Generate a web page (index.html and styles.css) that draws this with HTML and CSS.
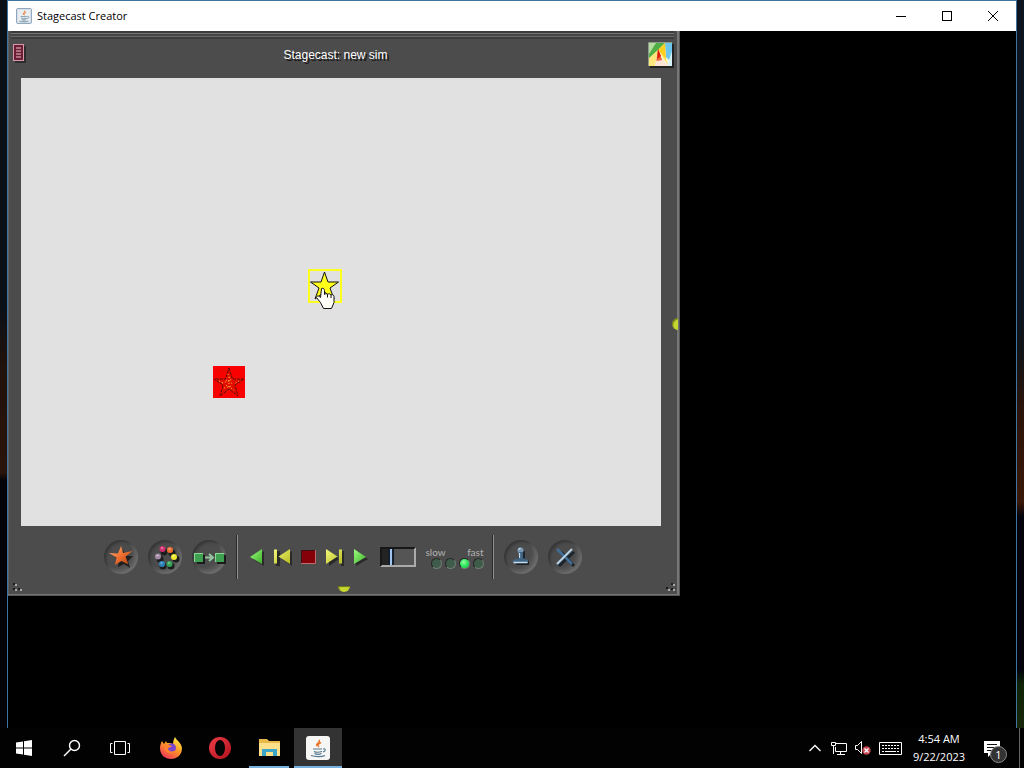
FILE: index.html
```html
<!DOCTYPE html>
<html lang="en">
<head>
<meta charset="utf-8">
<title>Stagecast Creator</title>
<link rel="stylesheet" href="styles.css">
</head>
<body>
<svg class="defs" aria-hidden="true">
  <defs>
    <linearGradient id="green" x1="0" y1="0" x2="1" y2="1"><stop offset="0" stop-color="#9cff7c"/><stop offset="1" stop-color="#3fae2c"/></linearGradient>
    <linearGradient id="lime" x1="0" y1="0" x2="1" y2="1"><stop offset="0" stop-color="#f6f77c"/><stop offset="1" stop-color="#b4bd1e"/></linearGradient>
    <linearGradient id="orange" x1="0" y1="0" x2="1" y2="1"><stop offset="0" stop-color="#ffb27a"/><stop offset=".5" stop-color="#f07030"/><stop offset="1" stop-color="#a83c10"/></linearGradient>
    <linearGradient id="fox" x1=".8" y1="0" x2=".2" y2="1"><stop offset="0" stop-color="#fff04a"/><stop offset=".45" stop-color="#ff9a26"/><stop offset="1" stop-color="#f0305c"/></linearGradient>
    <linearGradient id="opera" x1="0" y1="0" x2="1" y2="1"><stop offset="0" stop-color="#f03c48"/><stop offset="1" stop-color="#b0121e"/></linearGradient>
    <symbol id="java" viewBox="0 0 24 24">
      <path d="M13 4c2 3-4 3-2 6M15 6.500c-3 1.500-4 2.500-2 4.500" fill="none" stroke="#e8762c" stroke-width="1.500"/>
      <path d="M7 13h9M8 15.500c2 1 5 1 8 0M8.500 17.500c2 1 5 1 7 0M5 19.500c4 1.500 11 1.500 14 0M17 13c3-1 3 2 0 3" fill="none" stroke="#54788f" stroke-width="1.100"/>
    </symbol>
  </defs>
</svg>

<main class="desktop">
  <section class="window">
    <header class="titlebar">
      <svg class="app-icon" viewBox="0 0 24 24"><rect x="1" y="1" width="22" height="22" rx="1" fill="#e9eef2" stroke="#7c98b2" stroke-width="1.500"/><use href="#java"/></svg>
      <h1 class="window-title">Stagecast Creator</h1>
      <button class="win-btn" aria-label="Minimize"><svg viewBox="0 0 12 12"><path d="M1 6.500h10"/></svg></button>
      <button class="win-btn" aria-label="Maximize"><svg viewBox="0 0 12 12"><rect x="1.500" y="1.500" width="9" height="9"/></svg></button>
      <button class="win-btn" aria-label="Close"><svg viewBox="0 0 12 12"><path d="M1 1l10 10M11 1L1 11"/></svg></button>
    </header>

    <div class="workspace">
      <section class="sim">
        <header class="sim-head">
          <button class="menu-btn" aria-label="Menu"><svg viewBox="0 0 16 20"><path d="M4 3h11v17H4z" fill="#2c2c2c"/><rect x="2.500" y="1.500" width="10" height="16" fill="#6b1e36" stroke="#d799aa"/><path d="M5 5h5M5 8h5M5 11h5M5 14h5" stroke="#efbec9"/></svg></button>
          <h2 class="sim-title">Stagecast: new sim</h2>
          <button class="logo-btn" aria-label="Stagecast">
            <svg viewBox="0 0 26 26"><path d="M2 2h24v24H2z" fill="#222"/><path d="M1 1h23v23H1z" fill="#fbf6e0"/><path d="M1 1h16l-7 7-9 9z" fill="#4fae46"/><path d="M1 1h7L1 12z" fill="#b6dda0"/><path d="M10 8L1 16v8h6z" fill="#ffe67c"/><path d="M17 1h7v20l-6-6z" fill="#6cc6ea"/><path d="M24 9v15h-5z" fill="#d7f1fa"/><path d="M10 8l7-7 1 16z" fill="#ffcf20"/><path d="M10 8l8 9 2 6z" fill="#ffe24a"/><path d="M10 7l5 13-7 1z" fill="#ee6a3c"/><path d="M10 7l3 7-4 3z" fill="#d8200c"/><path d="M8 19l7-1 6 6H7z" fill="#fde4d6"/><path d="M.5 24V.5H24" fill="none" stroke="#8d9a8c"/></svg>
          </button>
        </header>

        <div class="stage">
          <svg class="sprite sprite-yellow" viewBox="0 0 34 42"><rect x="1" y="1" width="32" height="32" fill="none" stroke="#ffff1c" stroke-width="2"/><path d="M16.500 3L20 13h10.500L22 19l4 11-9.500-7L7 30l4-11-8.500-6H13z" fill="#ffff1c" stroke="#111"/><path d="M13.500 19.500c2-1 3 1 3 2v4c1-1 3-1 3 0 1-1 3-1 3.500.500 1-1 3 0 3 1.500v6l-2.500 6h-8l-3-6-4-5c0-2 2-2 4 0z" fill="#fffdf5" stroke="#111"/><path d="M19.500 25.500v3M23 26v3" stroke="#111"/></svg>
          <svg class="sprite sprite-red" viewBox="0 0 32 32"><path d="M0 0h32v32H0z" fill="#fb0000"/><path d="M16 2l3.500 11H31l-9 6 3 11-9-7-9 7 3-11-9-6h11.500z" fill="#e20c00" stroke="#5c0c00" stroke-dasharray="3 1"/><path d="M15 8l3 6M13 14l7 4M9 17l9-3M11 22l8-2M13 19l8 5M16 11v11M6 15l4 2M26 15l-5 3" fill="none" stroke="#ffb830" stroke-dasharray="1 2"/><path d="M3 5h10M2 17v13M6 14v7M28 14v12M12 27h9" fill="none" stroke="#b82000" stroke-dasharray="1 2"/></svg>
        </div>

        <footer class="toolbar">
          <div class="group rounds">
            <button class="round" aria-label="Characters"><svg viewBox="0 0 34 34"><path d="M19 10l3 6 7 0-5 5 2 7-6-4-6 3 1-6-4-4 6-1z" fill="#1f1f1f"/><path d="M17 6l2 7 9.500-2-7 5.500 3 8-7-3.500-6.500 4 1.500-7.500L5 13l9 .5z" fill="url(#orange)"/></svg></button>
            <button class="round" aria-label="Variables"><svg viewBox="0 0 34 34"><g fill="#1d1d1d"><circle cx="16" cy="12" r="3.500"/><circle cx="24" cy="13" r="3.500"/><circle cx="28" cy="19" r="3.500"/><circle cx="23" cy="26" r="3.500"/><circle cx="15" cy="26" r="3.500"/><circle cx="12" cy="19" r="3.500"/></g><circle cx="14.500" cy="9" r="3" fill="#d03070"/><circle cx="22" cy="10" r="3" fill="#ec7030"/><circle cx="26" cy="17" r="3" fill="#f0ea30"/><circle cx="21.500" cy="24" r="3" fill="#35a254"/><circle cx="14" cy="24" r="3" fill="#2d83b8"/><circle cx="10" cy="16.500" r="3" fill="#a48ba6"/><path d="M13 8h2M20.500 9h2M24.500 16h2M20 23h2M12.500 23h2M8.500 15.500h2" stroke="#ffffffa0"/></svg></button>
            <button class="round" aria-label="Rules"><svg viewBox="0 0 34 34"><path d="M5 15h8v9H5zM25 15h9v9h-9z" fill="#1b1b1b"/><path d="M2 13h9v9H2zM23 13h9v9h-9z" fill="#3fa052"/><path d="M2.500 22v-8.500H11M23.500 22v-8.500H32" fill="none" stroke="#8ad795"/><path d="M13 17.500h8M17 14l4 3.500-4 3.500" fill="none" stroke="#96c3a0" stroke-width="2"/></svg></button>
          </div>
          <span class="divider"></span>
          <div class="group transport">
            <button aria-label="Run backwards"><svg viewBox="0 0 18 20"><path d="M5 12l11-8v15z" fill="#292929"/><path d="M2 10l12-8v15z" fill="url(#green)"/></svg></button>
            <button aria-label="Step back"><svg viewBox="0 0 18 20"><path d="M2 4h4v15H2zM8 12l10-8v15z" fill="#292929"/><path d="M0 2.500h3v14H0zM4.500 9.500L16 2v15z" fill="url(#lime)"/></svg></button>
            <button aria-label="Stop"><svg viewBox="0 0 18 20"><path d="M1 3h15v14H1z" fill="#850009"/><path d="M1.500 17V3.500H16" fill="none" stroke="#3c1014"/><path d="M1 16.500h14.500V3" fill="none" stroke="#c36c70"/></svg></button>
            <button aria-label="Step forward"><svg viewBox="0 0 18 20"><path d="M3 4l10 8-10 7zM15 4h3v15h-3z" fill="#292929"/><path d="M0 2l11.500 7.500L0 17zM13 2.500h3v14h-3z" fill="url(#lime)"/></svg></button>
            <button aria-label="Run"><svg viewBox="0 0 18 20"><path d="M4 4l12 8-12 7z" fill="#292929"/><path d="M2 2l12 8-12 7z" fill="url(#green)"/></svg></button>
          </div>
          <input class="timeline" type="range" min="0" max="100" value="20" aria-label="History">
          <fieldset class="speed" aria-label="Speed">
            <label for="speed-1">slow</label>
            <label class="fast" for="speed-4">fast</label>
            <div class="leds">
              <input type="radio" name="speed" id="speed-1">
              <input type="radio" name="speed" id="speed-2" aria-label="medium">
              <input type="radio" name="speed" id="speed-3" aria-label="brisk" checked>
              <input type="radio" name="speed" id="speed-4">
            </div>
          </fieldset>
          <span class="divider"></span>
          <div class="group rounds">
            <button class="round" aria-label="Stamp"><svg viewBox="0 0 34 34"><path d="M16 11h5v8l4 2v4H12z" fill="#1c2228"/><circle cx="16.500" cy="10.500" r="3" fill="#7898b4"/><path d="M15 12h4v6l5 2v3H9v-3l6-2z" fill="#416482"/><path d="M14.500 9.500l2-1.500M15.500 13v5M9.500 22.500h14" stroke="#c2dced" stroke-width="1.300"/></svg></button>
            <button class="round" aria-label="Delete"><svg viewBox="0 0 34 34"><path d="M11 26L26 12M13 12l13 14" stroke="#1d252c" stroke-width="3"/><path d="M9 9l15 15" stroke="#416d99" stroke-width="2.500"/><path d="M9 24L24 9" stroke="#b8d3e8" stroke-width="2"/></svg></button>
          </div>
        </footer>

        <svg class="grip grip-left" viewBox="0 0 12 12"><path d="M2 2h2v2H2zM2 7h2v2H2zM7 7h2v2H7z" fill="#1c1c1c"/><path d="M4 3h2v2H4zM4 8h2v2H4zM9 8h2v2H9z" fill="#aaa"/></svg>
        <svg class="grip grip-right" viewBox="0 0 12 12"><path d="M6 2h2v2H6zM6 7h2v2H6zM1 6h2v2H1z" fill="#1c1c1c"/><path d="M8 3h2v2H8zM8 8h2v2H8zM3 8h2v2H3z" fill="#aaa"/></svg>
        <button class="tab tab-right" aria-label="Open side drawer"></button>
        <button class="tab tab-bottom" aria-label="Open bottom drawer"></button>
      </section>
    </div>
  </section>
</main>

<nav class="taskbar">
  <button class="task" aria-label="Start"><svg viewBox="0 0 24 24"><path d="M4 6.500l7-1v6H4zM12 5.300l8-1.300v7.500h-8zM4 12.500h7v6l-7-1zM12 12.500h8V20l-8-1.300z" fill="#fff"/></svg></button>
  <button class="task" aria-label="Search"><svg viewBox="0 0 24 24"><circle cx="14.500" cy="9.500" r="5" fill="none" stroke="#fff" stroke-width="1.400"/><path d="M11 13l-7 7" stroke="#fff" stroke-width="1.400"/></svg></button>
  <button class="task" aria-label="Task view"><svg viewBox="0 0 24 24"><path d="M6.500 5.500h11v13h-11zM4.500 7.500h-2v9h2M19.500 7.500h2v9h-2" fill="none" stroke="#fff"/></svg></button>
  <button class="task app" aria-label="Firefox"><svg viewBox="0 0 24 24"><path d="M1 12C1 9 2 7 3 5l2 3 2-3 1 2h3l3 1c0-3 1-5 2-7 1 3 6 5 7 11 0 7-5 11-11 11S1 19 1 12z" fill="url(#fox)"/><circle cx="12.500" cy="12" r="4.500" fill="#7846d0"/><path d="M6 8c3 0 4 1 7 2-1 2-4 1-4 3 1 3 5 3 8 1-2 5-10 4-11-1z" fill="#ff842d"/></svg></button>
  <button class="task app" aria-label="Opera"><svg viewBox="0 0 24 24"><circle cx="12" cy="12" r="11" fill="url(#opera)"/><ellipse cx="12" cy="12" rx="5" ry="8" fill="#050505"/></svg></button>
  <button class="task app open" aria-label="File Explorer"><svg viewBox="0 0 24 24"><path d="M2 3h8l2 2h11v15H2z" fill="#e9b94c"/><path d="M2 7h21v13H2z" fill="#ffe08a"/><path d="M5 20v-7h15v7h-4v-4H9v4z" fill="#3ca6c8"/></svg></button>
  <button class="task app open active" aria-label="Stagecast Creator"><svg viewBox="0 0 24 24"><rect width="24" height="24" rx="3" fill="#f6f6f4"/><use href="#java"/></svg></button>

  <div class="tray">
    <button aria-label="Show hidden icons"><svg class="chevron" viewBox="0 0 12 16"><path d="M.5 11L6 5.500 11.500 11" fill="none" stroke="#fff" stroke-width="1.300"/></svg></button>
    <button aria-label="Network"><svg class="net" viewBox="0 0 16 16"><path d="M5 3.500h10.500v8H4.500V7M9.500 12v2M6 14.500h8M.5 2.500h4v3h-4zM2.500 6v8" fill="none" stroke="#fff"/></svg></button>
    <button aria-label="Volume muted"><svg class="vol" viewBox="0 0 16 16"><path d="M.5 5.500h2l4-4v12l-4-4h-2z" fill="none" stroke="#fff"/><circle cx="11.500" cy="10.500" r="4.200" fill="#c44650"/><path d="M9.500 8.500l4 4M13.500 8.500l-4 4" stroke="#fff" stroke-width="1.300"/></svg></button>
    <button aria-label="Touch keyboard"><svg class="keys" viewBox="0 0 23 16"><path d="M.5 2.500h22v12H.5z" fill="none" stroke="#fff"/><path d="M3 5.500h17M3 8.500h17" stroke="#fff" stroke-dasharray="2 1"/><path d="M3 11.500h2M6 11.500h11M18 11.500h2" stroke="#fff"/></svg></button>
    <time class="clock" datetime="2023-09-22T04:54"><span>4:54 AM</span><span>9/22/2023</span></time>
    <button class="notify" aria-label="Notifications"><svg viewBox="0 0 18 18"><path d="M1 2h16v12H9l-4 4v-4H1z" fill="#fff"/><path d="M4 5.500h10M4 8.500h10M4 11.500h6" stroke="#111"/></svg><span class="badge">1</span></button>
    <span class="peek"></span>
  </div>
</nav>
</body>
</html>
```
FILE: styles.css
```css
* { box-sizing: border-box; }

body {
  margin: 0;
  min-height: 100vh;
  display: flex;
  flex-direction: column;
  background: #000;
  font-family: "Open Sans", "Noto Sans", sans-serif;
}

button {
  padding: 0;
  border: 0;
  background: none;
  color: inherit;
  font: inherit;
}

svg { display: block; }
h1, h2 { margin: 0; font-weight: 400; }
.defs { position: absolute; width: 0; height: 0; }

.desktop {
  flex: 1;
  display: flex;
  padding: 0 7px;
  background:
    linear-gradient(#0b1420 0 42%, #101418 48%, #2a130a 56%, #3a1708 69%, #01020c 71% 92%, #0e2406 94%, #16260a) right / 7px 100% no-repeat,
    linear-gradient(#0a1018 0 42%, #20120c 50%, #2a140c 65%, #020308 66%) left / 7px 100% no-repeat;
}

.window {
  flex: 1;
  display: flex;
  flex-direction: column;
  border: solid #3f74a0;
  border-width: 1px 1px 0;
  background: #000;
}

.titlebar {
  display: flex;
  align-items: center;
  height: 30px;
  padding-left: 8px;
  background: #fff;
  color: #000;
}
.app-icon { width: 16px; height: 16px; margin-right: 5px; }
.window-title { flex: 1; font-size: 11px; line-height: 16px; }
.win-btn {
  width: 46px;
  height: 30px;
  display: grid;
  place-items: center;
}
.win-btn svg {
  width: 12px;
  height: 12px;
  fill: none;
  stroke: #000;
}

.workspace { flex: 1; }

.sim {
  position: relative;
  width: calc(100% * 2 / 3);
  padding: 0 19px 0 13px;
  background: #4c4c4c;
  box-shadow: inset -1px -1px #555, inset -3px -2px #777, inset 1px 0 #606060;
}

.sim-head {
  display: flex;
  align-items: center;
  height: 47px;
  margin: 0 -13px 0 -10px;
  background: linear-gradient(#3b3b3b 0 2px, #757575 2px 3px, #454545 3px 5px, #6a6a6a 5px 6px, #3c3c3c 6px 8px, transparent 8px);
}
.menu-btn svg { width: 16px; height: 20px; }
.menu-btn { width: 16px; padding-bottom: 4px; }
.sim-title {
  flex: 1;
  padding-right: 4px;
  text-align: center;
  font-family: "Liberation Sans", Arial, sans-serif;
  font-size: 12px;
  line-height: 16px;
  color: #fff;
  text-shadow: 2px 2px #161616;
}
.logo-btn svg { width: 26px; height: 26px; }

.stage {
  position: relative;
  aspect-ratio: 10 / 7;
  background: #e1e1e1;
}
.sprite { position: absolute; }
.sprite-yellow { left: 45%; top: calc(300% / 7); width: 34px; height: 42px; margin: -1px; }
.sprite-red { left: 30%; top: calc(450% / 7); width: 32px; height: 32px; }

.toolbar {
  display: flex;
  align-items: center;
  justify-content: center;
  gap: 10px;
  height: 70px;
  margin: 0 -16px 0 -13px;
  padding-bottom: 8px;
}
.group { display: flex; align-items: center; }
.rounds { gap: 10px; }
.transport { gap: 8px; }
.transport svg { width: 18px; height: 20px; }
.round {
  width: 34px;
  height: 34px;
  border-radius: 50%;
  box-shadow: inset 2px 2px 3px #363636, inset -2px -2px 3px #6e6e6e, inset -5px -5px 3px #5a5a5a;
}
.round svg { width: 34px; height: 34px; }
.divider {
  width: 2px;
  height: 44px;
  border-left: 1px solid #292929;
  border-right: 1px solid #909090;
}

.timeline {
  appearance: none;
  width: 36px;
  height: 20px;
  margin: 0;
  padding: 0 2px;
  border: 2px solid;
  border-color: #171717 #aaa #aaa #171717;
  background: linear-gradient(90deg, #242424 0 8px, #555 13px);
}
.timeline::-webkit-slider-thumb {
  appearance: none;
  width: 6px;
  height: 16px;
  border: solid #14202c;
  border-width: 0 2px;
  background: #9fc4ef;
}

.speed {
  display: grid;
  grid-template-columns: 1fr 1fr;
  width: 60px;
  margin: 0 -2px;
  padding: 0;
  border: 0;
  font-family: Lato, sans-serif;
  font-size: 10px;
  line-height: 12px;
  color: #b2b2b2;
}
.speed label { padding-left: 2px; }
.fast { text-align: right; }
.leds {
  grid-column: 1 / -1;
  display: flex;
  justify-content: flex-end;
  gap: 3px;
}
.leds input {
  appearance: none;
  width: 11px;
  height: 11px;
  margin: 0;
  border: 1px solid;
  border-color: #262626 #6d7d72 #6d7d72 #262626;
  border-radius: 50%;
  background: #3f5c4a;
}
.leds input:checked { background: radial-gradient(circle at 40% 35%, #8cffa0, #22e050 60%); }

.grip {
  position: absolute;
  bottom: 3px;
  width: 12px;
  height: 12px;
}
.grip-left { left: 3px; }
.grip-right { right: 3px; }
.tab {
  position: absolute;
  background: #c6d82e;
  box-shadow: inset 1px 1px 1px #65701e;
}
.tab-right {
  right: 2px;
  top: calc(50% + 4px);
  width: 6px;
  height: 12px;
  border-radius: 6px 0 0 6px;
}
.tab-bottom {
  bottom: 4px;
  left: 50%;
  width: 12px;
  height: 6px;
  margin-left: -6px;
  border-radius: 0 0 6px 6px;
}

.taskbar {
  display: flex;
  height: 40px;
  background: #020202;
  color: #fff;
}
.task {
  width: 48px;
  display: grid;
  place-items: center;
}
.task svg { width: 24px; height: 24px; }
.task.app { width: 49px; border-bottom: 2px solid transparent; border-top: 2px solid transparent; }
.task:nth-child(4) { margin-left: 2px; }
.task.open { width: 40px; margin: 0 5px; border-bottom-color: #76b1e0; }
.task.active { width: 48px; margin: 0; border-top-color: #333; background: #333; }

.tray {
  flex: 1;
  display: flex;
  align-items: center;
  justify-content: flex-end;
}
.tray svg { height: 16px; }
.chevron { width: 12px; margin-right: 10px; }
.net { width: 16px; margin-right: 8px; }
.vol { width: 16px; margin-right: 8px; }
.keys { width: 23px; margin-right: 10px; }
.clock {
  display: flex;
  flex-direction: column;
  width: 54px;
  text-align: center;
  font-size: 11px;
  line-height: 18px;
  white-space: nowrap;
}
.notify { position: relative; margin: 0 18px 0 17px; }
.notify svg { width: 18px; height: 18px; }
.badge {
  position: absolute;
  left: 7px;
  top: 7px;
  width: 17px;
  height: 17px;
  border: 1px solid #8a8a8a;
  border-radius: 50%;
  background: #333;
  font-size: 11px;
  line-height: 15px;
  text-align: center;
}
.peek { align-self: stretch; width: 5px; border-left: 1px solid #666; }
```
